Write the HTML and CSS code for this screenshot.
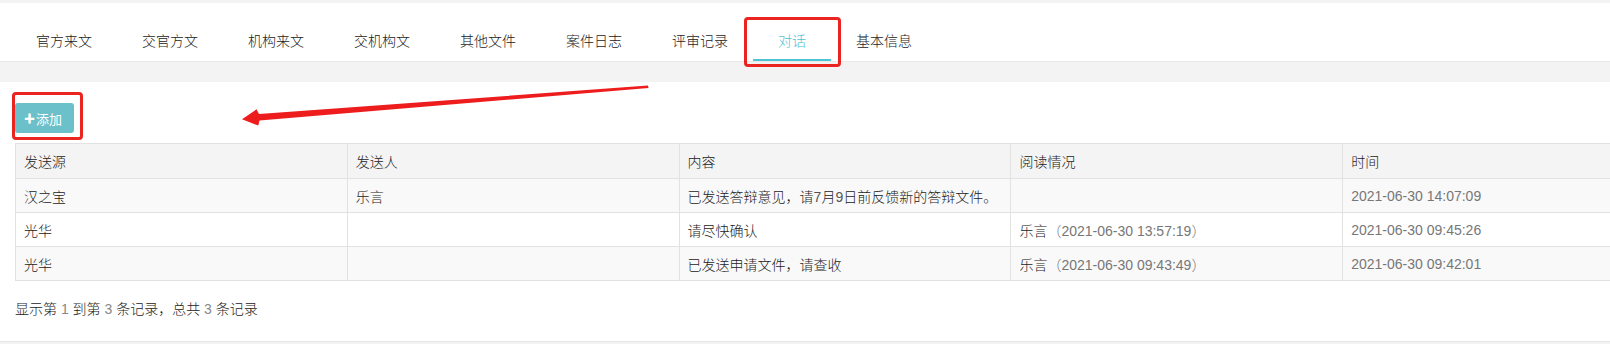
FILE: index.html
```html
<!DOCTYPE html>
<html lang="zh-CN">
<head>
<meta charset="utf-8">
<title>对话</title>
<link rel="stylesheet" href="styles.css">
</head>
<body>
<div class="page">
  <nav class="tabs">
    <div class="tab">官方来文</div>
    <div class="tab">交官方文</div>
    <div class="tab">机构来文</div>
    <div class="tab">交机构文</div>
    <div class="tab">其他文件</div>
    <div class="tab">案件日志</div>
    <div class="tab">评审记录</div>
    <div class="tab active">对话</div>
    <div class="tab">基本信息</div>
  </nav>
  <div class="band"></div>
  <section class="panel">
    <div class="toolbar">
      <span class="btn-wrap">
        <button class="btn-add"><span class="plus">✚</span>添加</button>
      </span>
    </div>
    <table class="grid">
      <thead>
        <tr><th>发送源</th><th>发送人</th><th>内容</th><th>阅读情况</th><th>时间</th></tr>
      </thead>
      <tbody>
        <tr class="odd"><td>汉之宝</td><td>乐言</td><td>已发送答辩意见，请<span class="digit">7</span>月<span class="digit">9</span>日前反馈新的答辩文件。</td><td></td><td class="muted">2021-06-30 14:07:09</td></tr>
        <tr><td>光华</td><td></td><td>请尽快确认</td><td>乐言<span class="muted">（2021-06-30 13:57:19）</span></td><td class="muted">2021-06-30 09:45:26</td></tr>
        <tr class="odd"><td>光华</td><td></td><td>已发送申请文件，请查收</td><td>乐言<span class="muted">（2021-06-30 09:43:49）</span></td><td class="muted">2021-06-30 09:42:01</td></tr>
      </tbody>
    </table>
    <p class="summary">显示第 <span class="num">1</span> 到第 <span class="num">3</span> 条记录，总共 <span class="num">3</span> 条记录</p>
  </section>
  <svg class="arrow" width="1610" height="344" viewBox="0 0 1610 344">
    <polygon points="648,85.6 259,114 256.5,109.3 242,119.3 258.3,125.6 259.5,120.6 648.5,88" fill="#ee1d1d"/>
  </svg>
</div>
</body>
</html>
```

FILE: styles.css
```css
html, body {
  margin: 0;
  padding: 0;
}
body {
  background: #f3f3f3;
  font-family: "Liberation Sans", "Noto Sans CJK SC", sans-serif;
  font-size: 14px;
  font-weight: 300;
  color: #222;
  overflow: hidden;
  width: 1610px;
  height: 344px;
}
.page {
  position: relative;
  padding-top: 3px;
}
.tabs {
  display: flex;
  background: #fff;
  padding: 18px 0 0 11px;
}
.tab {
  position: relative;
  padding: 0 25px;
  height: 40px;
  line-height: 40px;
  color: #222;
  white-space: nowrap;
}
.tab.active {
  color: #4ec3d6;
}
.tab.active::after {
  content: "";
  position: absolute;
  left: 0;
  right: 0;
  bottom: 0;
  height: 2px;
  background: #4ec3d6;
}
.tab.active::before {
  content: "";
  position: absolute;
  left: -9px;
  right: -10px;
  top: -4px;
  bottom: -6px;
  border: 3px solid #ea2420;
  border-radius: 4px;
  z-index: 2;
}
.band {
  height: 20px;
  border-top: 1px solid #e9e9e9;
  background: #f3f3f3;
}
.panel {
  background: #fff;
  height: 238px;
  padding: 21px 0 0 15px;
  overflow: hidden;
  border-bottom: 1px solid #e6e6e6;
}
.toolbar {
  height: 30px;
  display: flex;
}
.btn-wrap {
  position: relative;
  display: inline-flex;
}
.btn-wrap::before {
  content: "";
  position: absolute;
  left: -3px;
  right: -9px;
  top: -11px;
  bottom: -7px;
  border: 3px solid #ea2420;
  border-radius: 4px;
}
.btn-add {
  height: 30px;
  width: 59px;
  padding: 0 0 0 9px;
  border: none;
  border-radius: 3px;
  background: #6bc0c9;
  color: #fff;
  font-family: "Noto Sans CJK SC", sans-serif;
  font-size: 13px;
  font-weight: 400;
  display: flex;
  align-items: center;
}
.plus {
  font-size: 11px;
  margin-right: 1px;
}
.grid {
  margin-top: 10px;
  width: 1660px;
  table-layout: fixed;
  border-collapse: collapse;
  border: 1px solid #dedede;
}
.grid th, .grid td {
  width: 20%;
  text-align: left;
  font-weight: 300;
  padding: 0 8px;
  height: 33px;
  border: 1px solid #e2e2e2;
  white-space: nowrap;
  overflow: hidden;
}
.grid th {
  background: #f4f4f4;
  height: 34px;
}
.grid tr.odd td {
  background: #f9f9f9;
}
.digit {
  color: #555;
}
.muted {
  color: #777;
}
.summary {
  margin: 18px 0 0;
  line-height: 20px;
}
.num {
  color: #888;
}
.arrow {
  position: absolute;
  left: 0;
  top: 0;
  pointer-events: none;
}
```
